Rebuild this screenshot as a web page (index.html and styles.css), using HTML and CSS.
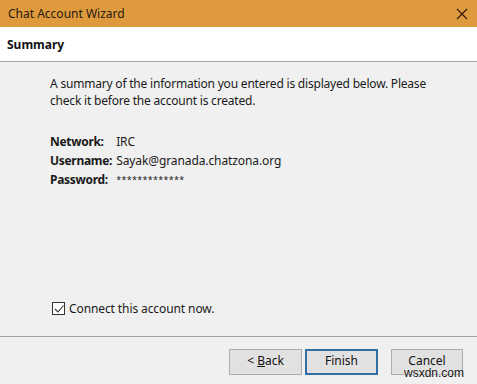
FILE: index.html
```html
<!DOCTYPE html>
<html>
<head>
<meta charset="utf-8">
<link rel="stylesheet" href="styles.css">
</head>
<body>
<div class="window">
  <div class="titlebar">
    <span class="title">Chat Account Wizard</span>
    <svg class="close" width="12" height="12" viewBox="0 0 12 12"><path d="M1 1 L11 11 M11 1 L1 11" stroke="#2b1a10" stroke-width="1.1" fill="none"/></svg>
  </div>
  <div class="header">Summary</div>
  <div class="content">
    <p class="intro">A summary of the information you entered is displayed below. Please check it before the account is created.</p>
    <div class="details">
      <span class="label">Network:</span><span class="value">IRC</span>
      <span class="label">Username:</span><span class="value">Sayak@granada.chatzona.org</span>
      <span class="label">Password:</span><span class="value pw">*************</span>
    </div>
    <label class="check">
      <span class="box"><svg width="10" height="10" viewBox="0 0 10 10"><path d="M1 5 L4 8 L9.5 1.5" stroke="#333" stroke-width="1.1" fill="none"/></svg></span>
      Connect this account now.
    </label>
  </div>
  <div class="footer">
    <button class="btn back">&lt; <u>B</u>ack</button>
    <button class="btn finish">Finish</button>
    <button class="btn cancel">Cancel</button>
    <span class="watermark">wsxdn.com</span>
  </div>
</div>
</body>
</html>
```
FILE: styles.css
```css
* { box-sizing: border-box; }
html, body { margin: 0; padding: 0; }
body {
  width: 477px;
  height: 384px;
  overflow: hidden;
  font-family: "Noto Sans", "Open Sans", sans-serif;
  font-size: 12px;
  color: #1a1a1a;
  background: #f0f0f0;
}
.window {
  display: flex;
  flex-direction: column;
  height: 384px;
}
.titlebar {
  height: 27px;
  background: #de9a3d;
  display: flex;
  align-items: center;
  justify-content: space-between;
  padding: 0 9px 0 8px;
}
.title { color: #2b1a10; font-size: 12px; }
.close { display: block; }
.header {
  height: 35px;
  background: #fff;
  border-bottom: 1px solid #a0a0a0;
  display: flex;
  align-items: center;
  padding-left: 7px;
  font-weight: bold;
  font-size: 12px;
  color: #111;
}
.content {
  flex: 1;
  padding: 13px 20px 0 50px;
  display: flex;
  flex-direction: column;
}
.intro {
  margin: 0;
  line-height: 17px;
  width: 400px;
  letter-spacing: -0.2px;
}
.details {
  margin-top: 23px;
  display: grid;
  grid-template-columns: max-content auto;
  column-gap: 4px;
  line-height: 19px;
}
.label { font-weight: bold; letter-spacing: -0.3px; }
.value { letter-spacing: -0.1px; }
.pw { font-size: 9px; letter-spacing: 0.3px; }
.check {
  margin-top: auto;
  margin-bottom: 19px;
  display: flex;
  align-items: center;
  gap: 4px;
  margin-left: 2px;
  letter-spacing: -0.1px;
}
.box {
  width: 13px;
  height: 13px;
  border: 1px solid #333;
  background: #fff;
  display: flex;
  align-items: center;
  justify-content: center;
}
.box svg { display: block; }
.footer {
  height: 48px;
  border-top: 1px solid #a0a0a0;
  display: flex;
  align-items: flex-start;
  padding: 12px 14px 0 229px;
  position: relative;
}
.btn {
  height: 26px;
  width: 73px;
  font-family: inherit;
  font-size: 12px;
  line-height: 12px;
  color: #111;
  background: #e1e1e1;
  border: 1px solid #adadad;
  padding: 0 0 3px 0;
}
.finish {
  margin-left: 3px;
  border: 2px solid #2f6fa6;
  width: 73px;
}
.cancel { margin-left: 13px; width: 72px; }
.watermark {
  position: absolute;
  left: 404px;
  top: 30px;
  font-family: "Liberation Sans", sans-serif;
  font-size: 12px;
  line-height: 12px;
  color: #111;
  text-shadow: 0 0 2px #fff;
}
```
